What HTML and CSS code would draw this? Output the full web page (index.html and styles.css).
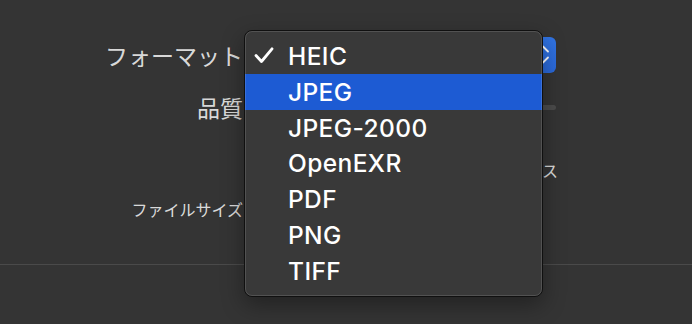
FILE: index.html
```html
<!DOCTYPE html>
<html lang="ja">
<head>
<meta charset="utf-8">
<title>書き出し</title>
<link rel="stylesheet" href="styles.css">
</head>
<body>
<div class="dialog">
  <div class="form">
    <div class="row row-format">
      <div class="label">フォーマット</div>
      <div class="control">
        <div class="popup">
          <svg class="chevrons" width="14" height="20" viewBox="0 0 14 20" aria-hidden="true">
            <path d="M2 6.5 L7 1.5 L12 6.5" fill="none" stroke="#fff" stroke-width="1.8" stroke-linecap="round" stroke-linejoin="round"/>
            <path d="M2 12.5 L7 17.5 L12 12.5" fill="none" stroke="#fff" stroke-width="1.8" stroke-linecap="round" stroke-linejoin="round"/>
          </svg>
        </div>
      </div>
    </div>
    <div class="row row-quality">
      <div class="label">品質</div>
      <div class="control"><div class="track"></div></div>
    </div>
    <div class="row row-extra">
      <div class="label"></div>
      <div class="control"><div class="extra">ベース</div></div>
    </div>
    <div class="row row-size">
      <div class="label small">ファイルサイズ</div>
      <div class="control"></div>
    </div>
  </div>
  <div class="separator"></div>
</div>

<div class="menu">
  <div class="item checked">
    <span class="mark">
      <svg width="20" height="17" viewBox="0 0 20 17" aria-hidden="true">
        <path d="M2 8.5 L7.5 14.5 L18 1.8" fill="none" stroke="#fff" stroke-width="2.8" stroke-linecap="round" stroke-linejoin="round"/>
      </svg>
    </span>
    <span class="text">HEIC</span>
  </div>
  <div class="item selected"><span class="mark"></span><span class="text">JPEG</span></div>
  <div class="item"><span class="mark"></span><span class="text">JPEG-2000</span></div>
  <div class="item"><span class="mark"></span><span class="text">OpenEXR</span></div>
  <div class="item"><span class="mark"></span><span class="text">PDF</span></div>
  <div class="item"><span class="mark"></span><span class="text">PNG</span></div>
  <div class="item"><span class="mark"></span><span class="text">TIFF</span></div>
</div>
</body>
</html>
```

FILE: styles.css
```css
html, body {
  margin: 0;
  padding: 0;
}

body {
  width: 692px;
  height: 324px;
  overflow: hidden;
  background: #343434;
  font-family: "Noto Sans CJK JP", "Noto Sans", sans-serif;
  position: relative;
}

.dialog {
  padding-top: 37px;
}

.form {
  display: flex;
  flex-direction: column;
}

.row {
  display: flex;
  align-items: center;
}

.row-format { height: 36px; }
.row-quality { height: 68px; }
.row-extra { height: 58px; }
.row-size { height: 20px; }

.label {
  width: 243px;
  flex: none;
  text-align: right;
  color: rgba(255, 255, 255, 0.84);
  font-size: 23px;
  line-height: 1;
  white-space: nowrap;
}

.label.small {
  font-size: 16px;
}

.control {
  margin-left: 8px;
  width: 305px;
  flex: none;
  display: flex;
  flex-direction: column;
}

.popup {
  height: 36px;
  border-radius: 6px;
  background: linear-gradient(#3174e3, #2a68d9);
  display: flex;
  align-items: center;
  justify-content: flex-end;
  padding-right: 6px;
}

.chevrons {
  display: block;
}

.track {
  height: 5px;
  border-radius: 3px;
  background: #4b4b4b;
}

.extra {
  text-align: right;
  margin-right: -2px;
  font-size: 16px;
  color: rgba(255, 255, 255, 0.84);
  line-height: 1;
}

.separator {
  margin-top: 45px;
  height: 1px;
  background: #4a4a4a;
}

/* popup menu overlay */
.menu {
  position: absolute;
  left: 244px;
  top: 30px;
  width: 299px;
  height: 267px;
  box-sizing: border-box;
  border: 1px solid #101010;
  border-radius: 8px;
  background: #393939;
  padding: 7px 0;
  box-shadow: 0 8px 22px rgba(0, 0, 0, 0.35);
  font-family: Inter, "Liberation Sans", sans-serif;
}

.menu::after {
  content: "";
  position: absolute;
  inset: 0;
  border: 1px solid rgba(255, 255, 255, 0.13);
  border-radius: 7px;
  pointer-events: none;
}

.item {
  height: 35.75px;
  display: flex;
  align-items: center;
  color: #fff;
  font-size: 24.5px;
  font-weight: 500;
  letter-spacing: 0.4px;
  line-height: 1;
}

.item.selected {
  background: #1d5bd3;
}

.mark {
  width: 43px;
  flex: none;
  display: flex;
  align-items: center;
  padding-left: 9px;
  box-sizing: border-box;
}

.mark svg {
  display: block;
}

.text {
  padding-top: 1px;
}
```
